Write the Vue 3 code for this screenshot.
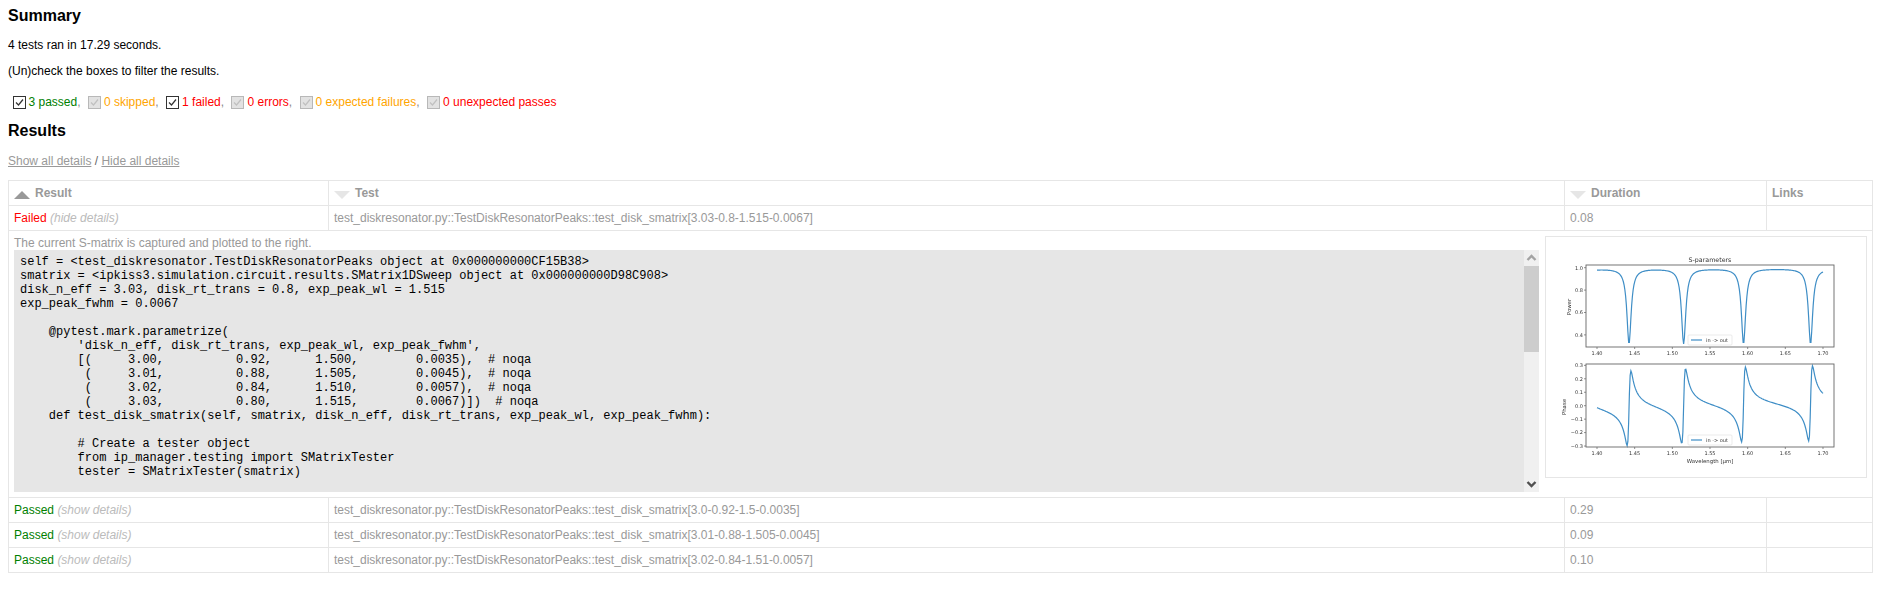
<script setup>
const filters = [
  { label: '3 passed', cls: 'passed', on: true },
  { label: '0 skipped', cls: 'skipped', on: false },
  { label: '1 failed', cls: 'failed', on: true },
  { label: '0 errors', cls: 'failed', on: false },
  { label: '0 expected failures', cls: 'skipped', on: false },
  { label: '0 unexpected passes', cls: 'failed', on: false, last: true },
]

const logText = `self = <test_diskresonator.TestDiskResonatorPeaks object at 0x000000000CF15B38>
smatrix = <ipkiss3.simulation.circuit.results.SMatrix1DSweep object at 0x000000000D98C908>
disk_n_eff = 3.03, disk_rt_trans = 0.8, exp_peak_wl = 1.515
exp_peak_fwhm = 0.0067

    @pytest.mark.parametrize(
        'disk_n_eff, disk_rt_trans, exp_peak_wl, exp_peak_fwhm',
        [(     3.00,          0.92,      1.500,        0.0035),  # noqa
         (     3.01,          0.88,      1.505,        0.0045),  # noqa
         (     3.02,          0.84,      1.510,        0.0057),  # noqa
         (     3.03,          0.80,      1.515,        0.0067)])  # noqa
    def test_disk_smatrix(self, smatrix, disk_n_eff, disk_rt_trans, exp_peak_wl, exp_peak_fwhm):

        # Create a tester object
        from ip_manager.testing import SMatrixTester
        tester = SMatrixTester(smatrix)
`

const passedRows = [
  { test: 'test_diskresonator.py::TestDiskResonatorPeaks::test_disk_smatrix[3.0-0.92-1.5-0.0035]', time: '0.29' },
  { test: 'test_diskresonator.py::TestDiskResonatorPeaks::test_disk_smatrix[3.01-0.88-1.505-0.0045]', time: '0.09' },
  { test: 'test_diskresonator.py::TestDiskResonatorPeaks::test_disk_smatrix[3.02-0.84-1.51-0.0057]', time: '0.10' },
]

// Chart geometry: local coordinates of the 320x240 picture
const ox = 1545
const oy = 237
const xOf = (w) => 1596 - ox + (w - 1.4) * 753.3
const yTop = (p) => 267.7 - oy + (1 - p) * 112
const yBot = (v) => 405.7 - oy - v * 134.5

const dips = [1.37, 1.4425, 1.515, 1.5945, 1.6835, 1.765]

const power = (w) => {
  let p = 0.992
  for (const d of dips) p -= 0.67 / (1 + ((w - d) / 0.0034) ** 2)
  return p
}
const phase = (w) => {
  let v = 0
  for (const d of dips) {
    const t = w - d
    v += (0.0014 * t) / (t * t + 0.0025 * 0.0025)
  }
  return v
}
const trace = (fn, yOf) => {
  const pts = []
  for (let i = 0; i <= 300; i++) {
    const w = 1.4 + i * 0.001
    pts.push(`${xOf(w).toFixed(2)},${yOf(fn(w)).toFixed(2)}`)
  }
  return pts.join(' ')
}
const powerLine = trace(power, yTop)
const phaseLine = trace(phase, yBot)

const axes = [
  { x: 1585 - ox, y: 265 - oy, w: 248, h: 82 },
  { x: 1585 - ox, y: 364 - oy, w: 248, h: 83 },
]
const xTicks = ['1.40', '1.45', '1.50', '1.55', '1.60', '1.65', '1.70'].map((t) => ({
  t,
  x: xOf(parseFloat(t)),
}))
const topTicks = ['1.0', '0.8', '0.6', '0.4'].map((t) => ({ t, y: yTop(parseFloat(t)) }))
const botTicks = ['0.3', '0.2', '0.1', '0.0', '\u22120.1', '\u22120.2', '\u22120.3'].map((t) => ({
  t,
  y: yBot(parseFloat(t.replace('\u2212', '-'))),
}))
const legends = [
  { x: 1687 - ox, y: 335 - oy },
  { x: 1687 - ox, y: 435 - oy },
]
</script>

<template>
  <main class="report">
    <h2>Summary</h2>
    <p>4 tests ran in 17.29 seconds.</p>
    <p>(Un)check the boxes to filter the results.</p>
    <div class="filters">
      <span v-for="f in filters" :key="f.label" class="filter">
        <span class="box" :class="{ off: !f.on }">
          <svg width="11" height="11" viewBox="0 0 11 11">
            <path d="M2 5.5 L4.5 8 L9 2.5" fill="none" stroke-width="1.2" />
          </svg>
        </span>
        <span :class="f.cls">{{ f.label }}</span><span v-if="!f.last" class="comma">,</span>
      </span>
    </div>
    <h2 class="results-title">Results</h2>
    <p class="toggle"><a>Show all details</a> / <a>Hide all details</a></p>

    <table class="results">
      <colgroup>
        <col class="c1" /><col class="c2" /><col class="c3" /><col class="c4" />
      </colgroup>
      <thead>
        <tr>
          <th><span class="sort asc"></span>Result</th>
          <th><span class="sort"></span>Test</th>
          <th><span class="sort"></span>Duration</th>
          <th>Links</th>
        </tr>
      </thead>
      <tbody>
        <tr>
          <td><span class="failed">Failed</span> <em>(hide details)</em></td>
          <td>test_diskresonator.py::TestDiskResonatorPeaks::test_disk_smatrix[3.03-0.8-1.515-0.0067]</td>
          <td>0.08</td>
          <td></td>
        </tr>
        <tr>
          <td colspan="4" class="extra">
            <div class="extra-row">
              <div class="extra-main">
                <div class="note">The current S-matrix is captured and plotted to the right.</div>
                <div class="log">
                  <pre class="log-text">{{ logText }}</pre>
                  <div class="scrollbar">
                    <div class="sb-btn">
                      <svg width="15" height="16" viewBox="0 0 15 16">
                        <path d="M3.5 10 L7.5 6 L11.5 10" fill="none" stroke="#a3a3a3" stroke-width="2.4" />
                      </svg>
                    </div>
                    <div class="sb-thumb"></div>
                    <div class="sb-track"></div>
                    <div class="sb-btn">
                      <svg width="15" height="16" viewBox="0 0 15 16">
                        <path d="M3.5 6 L7.5 10 L11.5 6" fill="none" stroke="#505050" stroke-width="2.4" />
                      </svg>
                    </div>
                  </div>
                </div>
              </div>
              <div class="image">
                <svg class="plot" width="320" height="240" viewBox="0 0 320 240">
                  <text x="164" y="25" class="t c title">S-parameters</text>
                  <text x="164" y="226" class="t c label">Wavelength [µm]</text>
                  <text class="t c label" transform="translate(25 70) rotate(-90)">Power</text>
                  <text class="t c label" transform="translate(20 170) rotate(-90)">Phase</text>

                  <g v-for="(a, i) in axes" :key="i">
                    <g v-for="tk in xTicks" :key="tk.t">
                      <line :x1="tk.x" :x2="tk.x" :y1="a.y + a.h" :y2="a.y + a.h + 2" class="tick" />
                      <text :x="tk.x" :y="a.y + a.h + 8" class="t c">{{ tk.t }}</text>
                    </g>
                  </g>
                  <g v-for="tk in topTicks" :key="tk.t">
                    <line :x1="axes[0].x - 2" :x2="axes[0].x" :y1="tk.y" :y2="tk.y" class="tick" />
                    <text :x="axes[0].x - 3" :y="tk.y + 1.8" class="t r">{{ tk.t }}</text>
                  </g>
                  <g v-for="tk in botTicks" :key="tk.t">
                    <line :x1="axes[1].x - 2" :x2="axes[1].x" :y1="tk.y" :y2="tk.y" class="tick" />
                    <text :x="axes[1].x - 3" :y="tk.y + 1.8" class="t r">{{ tk.t }}</text>
                  </g>

                  <polyline :points="powerLine" class="curve" />
                  <polyline :points="phaseLine" class="curve" />
                  <rect v-for="(a, i) in axes" :key="'ax' + i" :x="a.x" :y="a.y" :width="a.w" :height="a.h" class="spine" />

                  <g v-for="(l, i) in legends" :key="'lg' + i">
                    <rect :x="l.x" :y="l.y" width="44" height="10" rx="1" class="legend" />
                    <line :x1="l.x + 3" :x2="l.x + 14" :y1="l.y + 5" :y2="l.y + 5" class="curve" />
                    <text :x="l.x + 18" :y="l.y + 7" class="t">in -&gt; out</text>
                  </g>
                </svg>
              </div>
            </div>
          </td>
        </tr>
        <tr v-for="r in passedRows" :key="r.test">
          <td><span class="passed">Passed</span> <em>(show details)</em></td>
          <td>{{ r.test }}</td>
          <td>{{ r.time }}</td>
          <td></td>
        </tr>
      </tbody>
    </table>
  </main>
</template>

<style scoped>
.report {
  padding: 7px 8px 0;
  font-family: "Liberation Sans", Arial, sans-serif;
  font-size: 12px;
  line-height: 14px;
  color: #000;
}
h2 {
  margin: 0 0 13px;
  font-size: 16px;
  line-height: 18px;
  font-weight: bold;
}
p {
  margin: 0 0 12px;
}
.filters {
  display: flex;
  align-items: center;
  gap: 7.4px;
  height: 22px;
  padding-left: 4.5px;
  margin-top: 13px;
}
.filter {
  display: flex;
  align-items: center;
  white-space: nowrap;
}
.box {
  display: flex;
  align-items: center;
  justify-content: center;
  width: 13px;
  height: 13px;
  margin-right: 3px;
  box-sizing: border-box;
  border: 1px solid #333;
  background: #fff;
}
.box svg {
  display: block;
  stroke: #333;
}
.box.off {
  border-color: #b8b8b8;
  background: #e2e2e2;
}
.box.off svg {
  stroke: #c0c0c0;
}
.comma {
  color: #888;
}
.passed {
  color: green;
}
.skipped {
  color: orange;
}
.failed {
  color: red;
}
.results-title {
  margin: 9px 0 14px;
}
.toggle {
  margin: 0 0 12px;
  color: #666;
}
.toggle a {
  color: #999;
  text-decoration: underline;
}
.results {
  width: 1864px;
  table-layout: fixed;
  border-collapse: collapse;
  border: 1px solid #e6e6e6;
  color: #999;
}
.c1 {
  width: 320px;
}
.c2 {
  width: 1236px;
}
.c3 {
  width: 202px;
}
.c4 {
  width: 106px;
}
th,
td {
  border: 1px solid #e6e6e6;
  padding: 5px;
  text-align: left;
  font-weight: normal;
  height: 14px;
}
th {
  font-weight: bold;
}
em {
  color: #bbb;
  font-style: italic;
}
.sort {
  float: left;
  width: 0;
  height: 0;
  margin: 5px 5px 0 0;
  border-left: 8px solid transparent;
  border-right: 8px solid transparent;
  border-top: 8px solid #e6e6e6;
}
.sort.asc {
  border-top: 0;
  border-bottom: 8px solid #999;
}
.extra-row {
  display: flex;
  align-items: flex-start;
  gap: 6px;
}
.extra-main {
  flex: 1;
  min-width: 0;
}
.note {
  height: 14px;
}
.log {
  display: flex;
  height: 242px;
  background: #e6e6e6;
  color: #000;
}
.log-text {
  flex: 1;
  min-width: 0;
  margin: 0;
  padding: 5px 6px;
  overflow: hidden;
  font-family: "Liberation Mono", "Courier New", monospace;
  font-size: 12px;
  line-height: 14px;
  white-space: pre;
}
.scrollbar {
  display: flex;
  flex-direction: column;
  width: 15px;
  background: #f0f0f0;
}
.sb-btn {
  height: 16px;
}
.sb-btn svg {
  display: block;
}
.sb-thumb {
  height: 86px;
  background: #cdcdcd;
}
.sb-track {
  flex: 1;
}
.image {
  flex: none;
  width: 322px;
  height: 242px;
  box-sizing: border-box;
  border: 1px solid #e6e6e6;
  background: #fff;
  overflow: hidden;
}
.plot {
  display: block;
  filter: blur(0.45px);
}
.t {
  font-family: "DejaVu Sans", sans-serif;
  font-size: 5px;
  fill: #333;
}
.title {
  font-size: 6.3px;
}
.label {
  font-size: 5.4px;
}
.c {
  text-anchor: middle;
}
.r {
  text-anchor: end;
}
.tick {
  stroke: #444;
  stroke-width: 0.6;
}
.spine {
  fill: none;
  stroke: #666;
  stroke-width: 0.9;
}
.curve {
  fill: none;
  stroke: #3f8ec6;
  stroke-width: 1.2;
}
.legend {
  fill: #fff;
  stroke: #ddd;
  stroke-width: 0.6;
}
</style>
